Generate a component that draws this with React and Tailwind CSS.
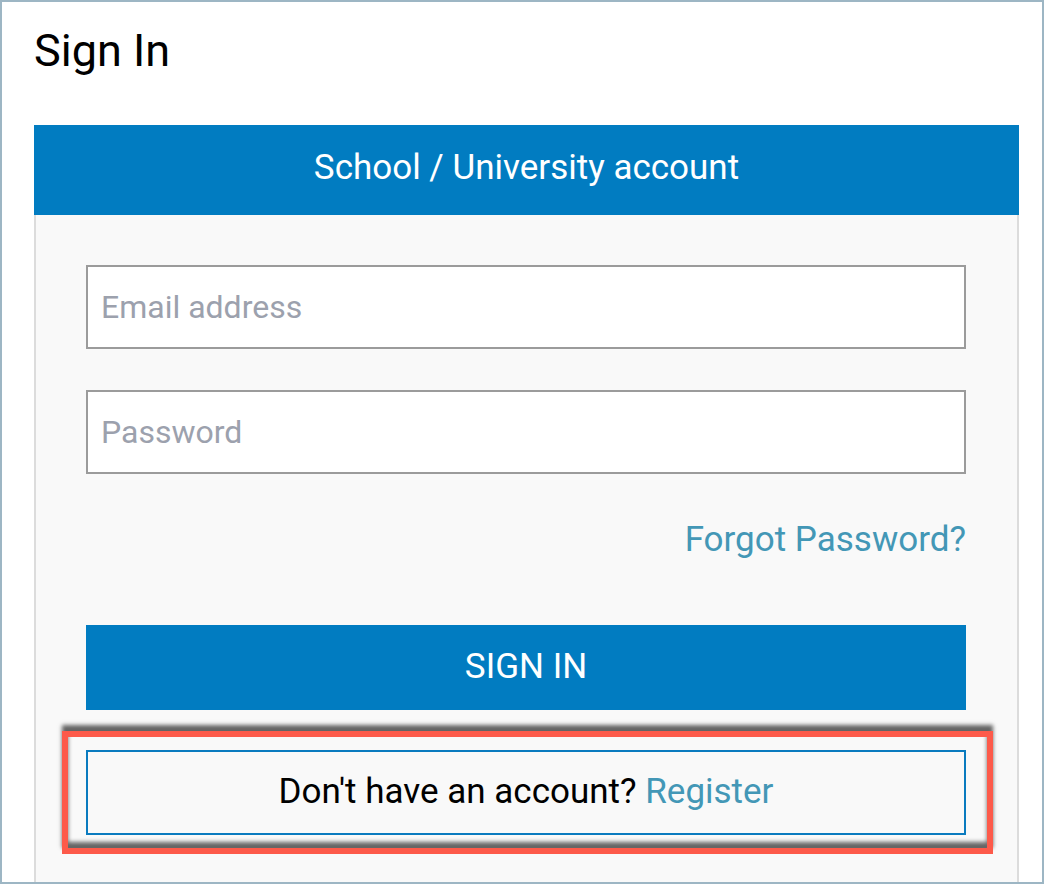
import React, { useState } from 'react';

const App = () => {
  const [email, setEmail] = useState('');
  const [password, setPassword] = useState('');

  return (
    <div
      className="w-[1044px] h-[884px] border-2 border-[#9db6c4] bg-white overflow-hidden"
      style={{ fontFamily: 'Roboto, "Liberation Sans", sans-serif' }}
    >
      {/* Title */}
      <h1 className="pl-[32px] pt-[22px] text-[45px] leading-[54px] text-black font-normal">
        Sign In
      </h1>

      {/* Card */}
      <div className="ml-[32px] mt-[47px] w-[985px]">
        <div className="h-[90px] pb-[4px] bg-[#017cc1] flex items-center justify-center">
          <span className="text-white text-[35px]">School / University account</span>
        </div>

        <div className="bg-[#f9f9f9] border-x-2 border-[#dcdcdc] pl-[50px] pr-[51px] pt-[50px] pb-[60px]">
          <input
            type="email"
            value={email}
            onChange={(e) => setEmail(e.target.value)}
            placeholder="Email address"
            className="block w-full h-[84px] bg-white border-2 border-[#9b9b9b] px-[13px] text-[32px] text-black placeholder:text-[#9ca1ad] focus:outline-none"
          />
          <input
            type="password"
            value={password}
            onChange={(e) => setPassword(e.target.value)}
            placeholder="Password"
            className="block w-full h-[84px] mt-[41px] bg-white border-2 border-[#9b9b9b] px-[13px] text-[32px] text-black placeholder:text-[#9ca1ad] focus:outline-none"
          />

          <div className="flex justify-end mt-[44px]">
            <a href="#" className="text-[35px] leading-[44px] text-[#4397b6]">
              Forgot Password?
            </a>
          </div>

          <button
            type="button"
            className="block w-full h-[85px] mt-[63px] bg-[#017cc1] text-white text-[35px]"
          >
            SIGN IN
          </button>

          {/* Register box with red annotation */}
          <div className="relative mt-[40px]">
            <div className="h-[85px] border-2 border-[#0a7bbf] flex items-center justify-center text-[35px]">
              <span className="text-black">Don't have an account?&nbsp;</span>
              <a href="#" className="text-[#4397b6]">Register</a>
            </div>
            <div className="absolute left-[-24px] right-[-27px] top-[-19px] bottom-[-19px] border-[6px] border-[#fd5a4a] shadow-[0_-6px_4px_rgba(0,0,0,0.6),inset_0_-6px_4px_rgba(0,0,0,0.6)] pointer-events-none" />
          </div>
        </div>
      </div>
    </div>
  );
};

export default App;
